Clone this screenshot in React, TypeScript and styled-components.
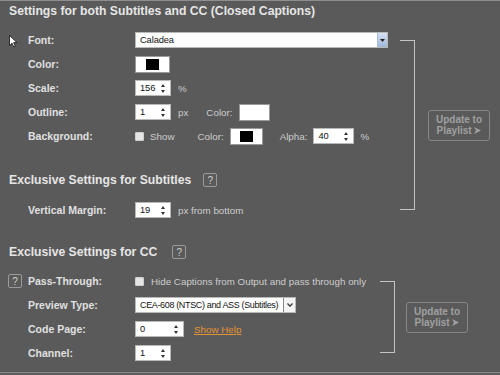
import React from 'react';
import styled, { createGlobalStyle } from 'styled-components';

const GlobalStyle = createGlobalStyle`
	html, body {
		margin: 0;
		padding: 0;
		background: #5e5e5e;
	}
	body {
		font-family: "Liberation Sans", Arial, sans-serif;
	}
`;

const Panel = styled.div`
	position: relative;
	box-sizing: border-box;
	width: 500px;
	height: 373px;
	background: #5a5a5a;
	border-top: 1px solid #8e8e8e;
	border-bottom: 1px solid #8a8a8a;
	overflow: hidden;
`;

const SectionTitle = styled.div<{ $top?: number }>`
	display: flex;
	align-items: center;
	height: 20px;
	margin-top: ${p => p.$top ?? 0}px;
	padding-left: 9px;
	font-size: 12.2px;
	font-weight: bold;
	color: #e6e6e6;
	white-space: nowrap;
`;

const HelpBox = styled.span<{ $gap?: number }>`
	display: inline-flex;
	align-items: center;
	justify-content: center;
	box-sizing: border-box;
	width: 14px;
	height: 14px;
	margin-left: ${p => p.$gap ?? 0}px;
	border: 1px solid #9a9a9a;
	border-radius: 2px;
	font-size: 10px;
	font-weight: normal;
	color: #cfcfcf;
`;

const Group = styled.div<{ $top: number }>`
	display: flex;
	margin-top: ${p => p.$top}px;
`;

const FormColumn = styled.div<{ $width: number }>`
	display: flex;
	flex-direction: column;
	width: ${p => p.$width}px;
	flex-shrink: 0;
`;

const Bracket = styled.div`
	width: 14px;
	margin: 12px 0 12px;
	border-top: 1px solid #c4c4c4;
	border-right: 1px solid #c4c4c4;
	border-bottom: 1px solid #c4c4c4;
`;

const UpdateButton = styled.div<{ $gap: number }>`
	align-self: center;
	box-sizing: border-box;
	width: 62px;
	height: 31px;
	margin-left: ${p => p.$gap}px;
	border: 1px solid #868686;
	border-radius: 3px;
	display: flex;
	flex-direction: column;
	align-items: center;
	justify-content: center;
	font-size: 10px;
	font-weight: bold;
	line-height: 11px;
	color: #a0a0a0;
`;

const Row = styled.div<{ $top?: number }>`
	display: flex;
	align-items: center;
	height: 24px;
	margin-top: ${p => p.$top ?? 0}px;
	padding-left: 8px;
	white-space: nowrap;
`;

const HelpSlot = styled.div`
	width: 20px;
	flex-shrink: 0;
	display: flex;
`;

const Label = styled.div`
	width: 107px;
	flex-shrink: 0;
	font-size: 10.5px;
	font-weight: bold;
	color: #e0e0e0;
`;

const Text = styled.span<{ $gap?: number }>`
	margin-left: ${p => p.$gap ?? 0}px;
	font-size: 9.8px;
	color: #cdcdcd;
`;

const HelpLink = styled.a`
	margin-left: 10px;
	font-size: 9.8px;
	color: #e39234;
	text-decoration: underline;
`;

const Field = styled.div<{ $width: number; $gap?: number }>`
	position: relative;
	box-sizing: border-box;
	display: flex;
	align-items: center;
	width: ${p => p.$width}px;
	height: 16px;
	margin-left: ${p => p.$gap ?? 0}px;
	background: #ffffff;
	border: 1px solid #b8b8b8;
	font-size: 9.3px;
	color: #111;
	padding-left: 4px;
`;

const FieldValue = styled.span<{ $tight?: boolean }>`
	flex: 1;
	overflow: hidden;
	letter-spacing: ${p => (p.$tight ? '-0.35px' : '-0.1px')};
	font-size: ${p => (p.$tight ? '9px' : 'inherit')};
`;

const BlueDrop = styled.div`
	width: 9px;
	align-self: stretch;
	display: flex;
	align-items: center;
	justify-content: center;
	background: linear-gradient(#d6e2f3, #9fb6d8);
	border-left: 1px solid #a9bcd8;
`;

const PlainDrop = styled.div`
	width: 11px;
	flex-shrink: 0;
	align-self: stretch;
	display: flex;
	align-items: center;
	justify-content: center;
	background: #f4f4f4;
	border-left: 1px solid #888;
`;

const SpinArrows = styled.div`
	display: flex;
	flex-direction: column;
	justify-content: space-between;
	align-self: stretch;
	padding: 3px 5px 2px 0;
`;

const Swatch = styled.div<{ $width: number; $gap?: number; $fill?: string }>`
	box-sizing: border-box;
	display: flex;
	align-items: center;
	justify-content: center;
	width: ${p => p.$width}px;
	height: 17px;
	margin-left: ${p => p.$gap ?? 0}px;
	background: #ffffff;
	border: 1px solid #9a9a9a;

	&::after {
		content: '';
		display: ${p => (p.$fill ? 'block' : 'none')};
		width: 13px;
		height: 11px;
		background: ${p => p.$fill};
	}
`;

const Check = styled.span`
	box-sizing: border-box;
	width: 9px;
	height: 9px;
	border-radius: 1px;
	background: #e4e4e4;
	border: 1px solid #cfcfcf;
`;

const Cursor = styled.svg`
	position: absolute;
	left: 9px;
	top: 34px;
`;

function Arrows() {
	return (
		<SpinArrows>
			<svg width="4" height="3" viewBox="0 0 4 3">
				<path d="M2 0 L4 3 L0 3 Z" fill="#333" />
			</svg>
			<svg width="4" height="3" viewBox="0 0 4 3">
				<path d="M0 0 L4 0 L2 3 Z" fill="#333" />
			</svg>
		</SpinArrows>
	);
}

function Spinner({ value, width = 36, gap }: { value: string; width?: number; gap?: number }) {
	return (
		<Field $width={width} $gap={gap}>
			<FieldValue>{value}</FieldValue>
			<Arrows />
		</Field>
	);
}

function Update({ gap }: { gap: number }) {
	return (
		<UpdateButton $gap={gap}>
			<span>Update to</span>
			<span>
				Playlist{' '}
				<svg width="7" height="7" viewBox="0 0 7 7">
					<path d="M0 0 L7 3.5 L0 7 L2 3.5 Z" fill="#a0a0a0" />
				</svg>
			</span>
		</UpdateButton>
	);
}

export default function App() {
	return (
		<>
			<GlobalStyle />
			<Panel>
				<SectionTitle>Settings for both Subtitles and CC (Closed Captions)</SectionTitle>

				<Group $top={7}>
					<FormColumn $width={400}>
						<Row>
							<HelpSlot />
							<Label>Font:</Label>
							<Field $width={253}>
								<FieldValue>Caladea</FieldValue>
								<BlueDrop>
									<svg width="5" height="3" viewBox="0 0 5 3">
										<path d="M0 0 L5 0 L2.5 3 Z" fill="#222" />
									</svg>
								</BlueDrop>
							</Field>
						</Row>
						<Row>
							<HelpSlot />
							<Label>Color:</Label>
							<Swatch $width={35} $fill="#000" />
						</Row>
						<Row>
							<HelpSlot />
							<Label>Scale:</Label>
							<Spinner value="156" />
							<Text $gap={7}>%</Text>
						</Row>
						<Row>
							<HelpSlot />
							<Label>Outline:</Label>
							<Spinner value="1" />
							<Text $gap={7}>px</Text>
							<Text $gap={18}>Color:</Text>
							<Swatch $width={31} $gap={6} />
						</Row>
						<Row>
							<HelpSlot />
							<Label>Background:</Label>
							<Check />
							<Text $gap={6}>Show</Text>
							<Text $gap={23}>Color:</Text>
							<Swatch $width={33} $gap={6} $fill="#000" />
							<Text $gap={17}>Alpha:</Text>
							<Spinner value="40" width={41} gap={6} />
							<Text $gap={6}>%</Text>
						</Row>

						<SectionTitle $top={22}>
							Exclusive Settings for Subtitles
							<HelpBox $gap={12}>?</HelpBox>
						</SectionTitle>

						<Row $top={8}>
							<HelpSlot />
							<Label>Vertical Margin:</Label>
							<Spinner value="19" />
							<Text $gap={7}>px from bottom</Text>
						</Row>
					</FormColumn>
					<Bracket />
					<Update gap={13} />
				</Group>

				<SectionTitle $top={20}>
					Exclusive Settings for CC
					<HelpBox $gap={15}>?</HelpBox>
				</SectionTitle>

				<Group $top={7}>
					<FormColumn $width={380}>
						<Row>
							<HelpSlot>
								<HelpBox>?</HelpBox>
							</HelpSlot>
							<Label>Pass-Through:</Label>
							<Check />
							<Text $gap={7}>Hide Captions from Output and pass through only</Text>
						</Row>
						<Row>
							<HelpSlot />
							<Label>Preview Type:</Label>
							<Field $width={161}>
								<FieldValue $tight>CEA-608 (NTSC) and ASS (Subtitles)</FieldValue>
								<PlainDrop>
									<svg width="6" height="4" viewBox="0 0 6 4">
										<path d="M0.5 0.5 L3 3.2 L5.5 0.5" stroke="#333" strokeWidth="1.2" fill="none" />
									</svg>
								</PlainDrop>
							</Field>
						</Row>
						<Row>
							<HelpSlot />
							<Label>Code Page:</Label>
							<Spinner value="0" width={49} />
							<HelpLink>Show Help</HelpLink>
						</Row>
						<Row>
							<HelpSlot />
							<Label>Channel:</Label>
							<Spinner value="1" />
						</Row>
					</FormColumn>
					<Bracket />
					<Update gap={11} />
				</Group>

				<Cursor width="9" height="13" viewBox="0 0 9 13">
					<path d="M0.5 0.5 L0.5 10.5 L3 8.2 L4.8 12 L6.3 11.3 L4.6 7.6 L8 7.6 Z" fill="#fff" stroke="#111" strokeWidth="0.8" />
				</Cursor>
			</Panel>
		</>
	);
}
